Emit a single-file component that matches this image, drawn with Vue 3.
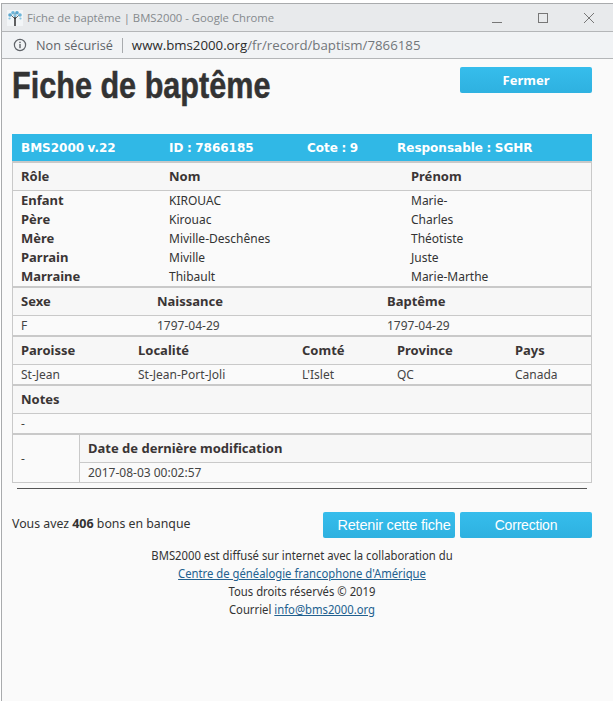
<script setup>
const persons = [
  ['Enfant', 'KIROUAC', 'Marie-'],
  ['Père', 'Kirouac', 'Charles'],
  ['Mère', 'Miville-Deschênes', 'Théotiste'],
  ['Parrain', 'Miville', 'Juste'],
  ['Marraine', 'Thibault', 'Marie-Marthe'],
]
</script>

<template>
  <div class="window">
    <div class="titlebar">
      <svg class="favicon" viewBox="0 0 16 16" width="16" height="16">
        <rect width="16" height="16" fill="#f2f5f7" />
        <rect x="7.3" y="6" width="1.4" height="10" fill="#222" />
        <path d="M8 9 L4 5 M8 9 L12 5 M8 7 L8 3" stroke="#2b2b2b" stroke-width=".7" />
        <circle cx="3" cy="5" r="1.8" fill="#5ba7cf" />
        <circle cx="6" cy="2.8" r="1.8" fill="#6db6da" />
        <circle cx="10" cy="2.8" r="1.8" fill="#5ba7cf" />
        <circle cx="13" cy="5" r="1.8" fill="#6db6da" />
        <circle cx="8" cy="5.5" r="1.6" fill="#86c4e2" />
        <circle cx="2.5" cy="8.5" r="1.1" fill="#86c4e2" />
        <circle cx="13.5" cy="8.5" r="1.1" fill="#86c4e2" />
      </svg>
      <span class="title-text">Fiche de baptême | BMS2000 - Google Chrome</span>
      <div class="win-controls">
        <svg width="12" height="12" viewBox="0 0 12 12"><path d="M1 10.5H11" stroke="#777" /></svg>
        <svg width="12" height="12" viewBox="0 0 12 12"><rect x="1.5" y="1.5" width="9" height="9" fill="none" stroke="#777" /></svg>
        <svg width="12" height="12" viewBox="0 0 12 12"><path d="M1 1L11 11M11 1L1 11" stroke="#777" /></svg>
      </div>
    </div>
    <div class="addressbar">
      <svg class="info" width="14" height="14" viewBox="0 0 14 14">
        <circle cx="7" cy="7" r="5.6" fill="none" stroke="#5f6368" stroke-width="1.2" />
        <rect x="6.3" y="6" width="1.4" height="4.2" fill="#5f6368" />
        <rect x="6.3" y="3.7" width="1.4" height="1.4" fill="#5f6368" />
      </svg>
      <span class="insecure">Non sécurisé</span>
      <span class="sep"></span>
      <span class="url"><span class="host">www.bms2000.org</span>/fr/record/baptism/7866185</span>
    </div>

    <main class="page">
      <header class="page-head">
        <h1><span>Fiche de baptême</span></h1>
        <button class="btn bold">Fermer</button>
      </header>

      <section class="record">
        <div class="row blue c-head">
          <div>BMS2000 v.22</div>
          <div>ID : 7866185</div>
          <div>Cote : 9</div>
          <div>Responsable : SGHR</div>
        </div>

        <div class="row head thick c-person">
          <div>Rôle</div><div>Nom</div><div>Prénom</div>
        </div>
        <div class="persons">
          <div v-for="p in persons" :key="p[0]" class="row person c-person">
            <div class="strong">{{ p[0] }}</div><div>{{ p[1] }}</div><div>{{ p[2] }}</div>
          </div>
        </div>

        <div class="row head thick c-birth">
          <div>Sexe</div><div>Naissance</div><div>Baptême</div>
        </div>
        <div class="row data c-birth">
          <div>F</div><div>1797-04-29</div><div>1797-04-29</div>
        </div>

        <div class="row head thick c-place">
          <div>Paroisse</div><div>Localité</div><div>Comté</div><div>Province</div><div>Pays</div>
        </div>
        <div class="row data c-place">
          <div>St-Jean</div><div>St-Jean-Port-Joli</div><div>L'Islet</div><div>QC</div><div>Canada</div>
        </div>

        <div class="row head thick"><div>Notes</div></div>
        <div class="row data"><div>-</div></div>

        <div class="last thick">
          <div class="last-left">-</div>
          <div class="last-right">
            <div class="row head"><div>Date de dernière modification</div></div>
            <div class="row data"><div>2017-08-03 00:02:57</div></div>
          </div>
        </div>
      </section>

      <hr class="rule" />

      <div class="actions">
        <p class="bank">Vous avez <b>406</b> bons en banque</p>
        <button class="btn light retain">Retenir cette fiche</button>
        <button class="btn light">Correction</button>
      </div>

      <footer class="foot">
        <p>BMS2000 est diffusé sur internet avec la collaboration du</p>
        <p><a href="#">Centre de généalogie francophone d'Amérique</a></p>
        <p>Tous droits réservés © 2019</p>
        <p>Courriel <a href="#">info@bms2000.org</a></p>
      </footer>
    </main>
  </div>
</template>

<style>
html, body { margin: 0; background: #fff; }
</style>

<style scoped>
* { box-sizing: border-box; }
.window {
  width: 613px;
  height: 701px;
  padding-top: 3px;
  padding-left: 1px;
  font-family: "Noto Sans", "Open Sans", sans-serif;
  color: #333;
  overflow: hidden;
  background: #fff;
}
.titlebar {
  height: 29px;
  display: flex;
  align-items: center;
  padding-left: 5px;
  background: #e8eaec;
  border-top: 1px solid #a9abad;
  border-bottom: 1px solid #b4b6b8;
  border-left: 1px solid #a9abad;
}
.favicon { margin-right: 4px; flex: none; }
.title-text { font-size: 11.3px; color: #85898c; font-family: "Open Sans", sans-serif; }
.win-controls { margin-left: auto; margin-right: 18px; display: flex; gap: 34px; }
.addressbar {
  height: 27px;
  display: flex;
  align-items: center;
  padding-left: 11px;
  background: #f1f3f5;
  border-bottom: 1px solid #b4b6b8;
  border-left: 1px solid #a9abad;
  font-family: "Open Sans", sans-serif;
  font-size: 13px;
}
.info { flex: none; margin-right: 9px; }
.insecure { color: #5f6368; font-size: 12.7px; }
.sep { width: 1px; height: 15px; background: #a8abae; margin: 0 9px; }
.url { color: #72767a; font-size: 13.25px; }
.host { color: #2b2b2b; }

.page {
  height: 642px;
  background: #fafafa;
  border-left: 1px solid #a9abad;
  padding: 0 20px 0 10px;
}
.page-head { display: flex; justify-content: space-between; align-items: flex-start; height: 75px; width: 580px; }
h1 {
  margin: 0;
  padding-top: 4px;
  font-family: "Liberation Sans", sans-serif;
  font-size: 36px;
  line-height: 46px;
  font-weight: 700;
  color: #333;
  white-space: nowrap;
  -webkit-text-stroke: .5px #333;
}
h1 span { display: inline-block; transform: scaleX(.85); transform-origin: left center; }
.btn {
  width: 132px;
  height: 26px;
  border: 0;
  border-radius: 2px;
  background: linear-gradient(#36bdec, #2eb1e0);
  color: #fff;
  padding: 0;
  font-size: 14px;
  font-family: "Liberation Sans", sans-serif;
}
.page-head .btn { margin-top: 8px; }
.btn.bold { font-family: "Noto Sans", sans-serif; font-weight: 700; font-size: 13px; }
.btn.light { letter-spacing: -.2px; }
.btn.retain { margin-right: 5px; padding-left: 10px; font-size: 14.5px; }

.record {
  width: 580px;
  border: 1px solid #c9c9c9;
  border-top: 0;
  font-size: 12px;
}
.row {
  display: grid;
  align-items: center;
}
.row > div { padding-left: 8px; white-space: nowrap; }
.c-head { grid-template-columns: 148px 138px 90px 1fr; }
.c-person { grid-template-columns: 148px 242px 1fr; }
.c-birth { grid-template-columns: 136px 230px 1fr; }
.c-place { grid-template-columns: 117px 164px 95px 118px 1fr; }
.blue {
  height: 27px;
  background: #30b8e6;
  color: #fff;
  font-family: "DejaVu Sans", sans-serif;
  font-weight: 700;
  font-size: 12px;
  word-spacing: -.7px;
  margin: 0 -1px;
  padding-left: 1px;
}
.head {
  height: 28px;
  padding-bottom: 2px;
  font-weight: 700;
  font-size: 13px;
  color: #3a3535;
  background: #f7f7f7;
  border-bottom: 1px solid #c9c9c9;
}
.head.thick { height: 30px; }
.thick { border-top: 2px solid #c9c9c9; }
.person { height: 19px; }
.strong { font-weight: 700; font-size: 13px; color: #3a3535; line-height: 17px; }
.data { height: 19px; color: #444; }
.last { display: flex; }
.last-left {
  width: 67px;
  flex: none;
  display: flex;
  align-items: center;
  padding-left: 8px;
  color: #444;
  border-right: 1px solid #c9c9c9;
}
.last-right { flex: 1; }

.rule {
  width: 570px;
  height: 0;
  margin: 5px 0 0 5px;
  border: 0;
  border-top: 1px solid #555;
}
.actions {
  display: flex;
  align-items: center;
  margin-top: 23px;
  width: 580px;
}
.bank { margin: 0 auto 3px 0; font-size: 12.3px; color: #333; }
.bank b { font-weight: 700; font-size: 12.5px; }

.foot { text-align: center; width: 580px; margin-top: 9px; font-size: 12px; }
.foot p { margin: 0; line-height: 18px; color: #333; transform: scaleX(.94); }
.foot a { color: #23618f; }
</style>
